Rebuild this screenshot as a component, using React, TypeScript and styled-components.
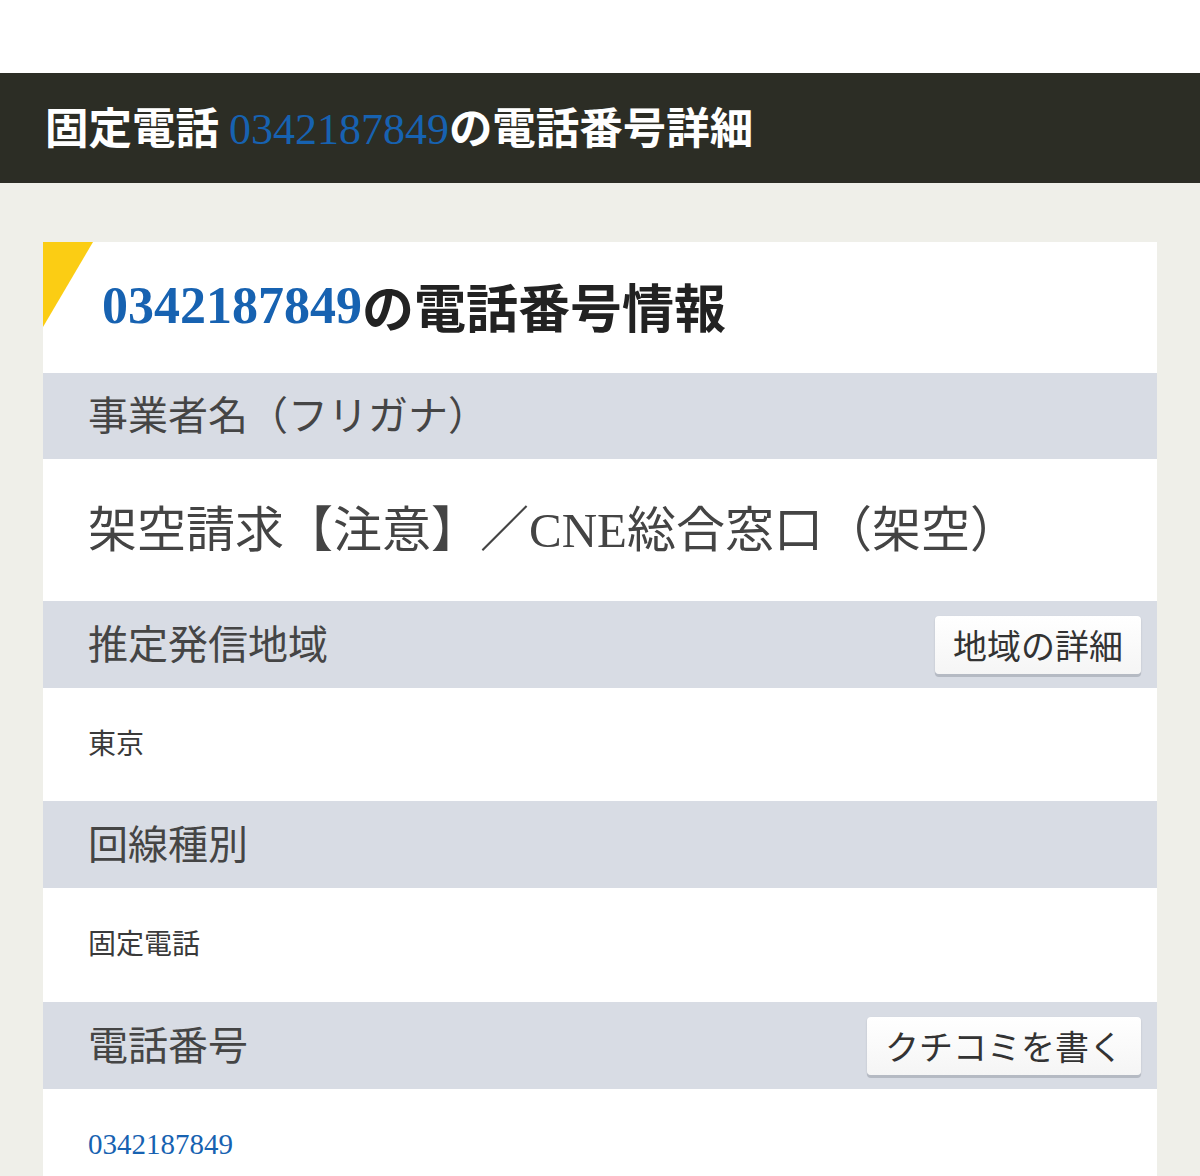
import React from "react";
import styled, { createGlobalStyle } from "styled-components";

const GlobalStyle = createGlobalStyle`
  html, body {
    margin: 0;
    padding: 0;
    background: #efefe9;
    font-family: "Noto Sans CJK JP", "Noto Sans", sans-serif;
  }
`;

const TopBand = styled.div`
  height: 73px;
  background: #ffffff;
`;

const Header = styled.header`
  height: 110px;
  background: #2c2d25;
  display: flex;
  align-items: center;
  padding-left: 45px;
  box-sizing: border-box;
`;

const HeaderTitle = styled.h1`
  margin: 0;
  font-size: 43.5px;
  font-weight: 700;
  color: #ffffff;
  line-height: 1;
`;

const Num = styled.span<{ $bold?: boolean; $size?: number }>`
  font-family: "Liberation Serif", serif;
  color: #1762b1;
  font-weight: ${(p) => (p.$bold ? 700 : 400)};
  font-size: ${(p) => (p.$size ? `${p.$size}px` : "inherit")};
`;

const Page = styled.main`
  padding: 59px 43px 0;
`;

const Card = styled.section`
  background: #ffffff;
  position: relative;
  overflow: hidden;
`;

const Corner = styled.div`
  position: absolute;
  left: 0;
  top: 0;
  width: 50px;
  height: 85px;
  background: #fbcd14;
  clip-path: polygon(0 0, 100% 0, 0 100%);
`;

const CardTitle = styled.h2`
  margin: 0;
  height: 131px;
  display: flex;
  align-items: center;
  padding: 0 0 4px 59px;
  box-sizing: border-box;
  font-size: 52px;
  font-weight: 700;
  color: #222222;
  line-height: 1;
`;

const LabelRow = styled.div<{ $h?: number }>`
  height: ${(p) => p.$h ?? 87}px;
  background: #d8dce4;
  display: flex;
  align-items: center;
  justify-content: space-between;
  padding: 0 16px 0 45px;
  box-sizing: border-box;
`;

const Label = styled.span`
  font-size: 40px;
  color: #454545;
  line-height: 1;
  margin-top: -6px;
`;

const Button = styled.button`
  height: 58px;
  padding: 0 18px;
  border: none;
  border-radius: 4px;
  background: linear-gradient(#ffffff, #f5f5f5);
  box-shadow: 0 3px 0 #b5bac3, 0 1px 2px rgba(0, 0, 0, 0.15);
  font-family: "Noto Sans CJK JP", sans-serif;
  font-size: 34px;
  color: #333333;
  line-height: 1;
  margin-top: 1px;
`;

const ValueRow = styled.div<{ $h: number }>`
  height: ${(p) => p.$h}px;
  display: flex;
  align-items: center;
  padding-left: 45px;
  box-sizing: border-box;
`;

const BigValue = styled.span`
  font-family: "Liberation Serif", "Noto Sans CJK JP", serif;
  font-size: 49px;
  color: #444444;
  line-height: 1;
`;

const SmallValue = styled.span`
  font-size: 28px;
  color: #3a3a3a;
  line-height: 1;
  margin-top: -6px;
`;

const LinkValue = styled.a`
  font-family: "Liberation Serif", serif;
  font-size: 29px;
  color: #1762b1;
  text-decoration: none;
  line-height: 1;
`;

export default function App() {
  return (
    <>
      <GlobalStyle />
      <TopBand />
      <Header>
        <HeaderTitle>
          固定電話 <Num $size={44}>0342187849</Num>の電話番号詳細
        </HeaderTitle>
      </Header>
      <Page>
        <Card>
          <Corner />
          <CardTitle>
            <Num $bold>0342187849</Num>の電話番号情報
          </CardTitle>
          <LabelRow $h={86}>
            <Label>事業者名（フリガナ）</Label>
          </LabelRow>
          <ValueRow $h={142}>
            <BigValue>架空請求【注意】／CNE総合窓口（架空）</BigValue>
          </ValueRow>
          <LabelRow>
            <Label>推定発信地域</Label>
            <Button>地域の詳細</Button>
          </LabelRow>
          <ValueRow $h={113}>
            <SmallValue>東京</SmallValue>
          </ValueRow>
          <LabelRow>
            <Label>回線種別</Label>
          </LabelRow>
          <ValueRow $h={114}>
            <SmallValue>固定電話</SmallValue>
          </ValueRow>
          <LabelRow>
            <Label>電話番号</Label>
            <Button>クチコミを書く</Button>
          </LabelRow>
          <ValueRow $h={110}>
            <LinkValue href="#">0342187849</LinkValue>
          </ValueRow>
        </Card>
      </Page>
    </>
  );
}
